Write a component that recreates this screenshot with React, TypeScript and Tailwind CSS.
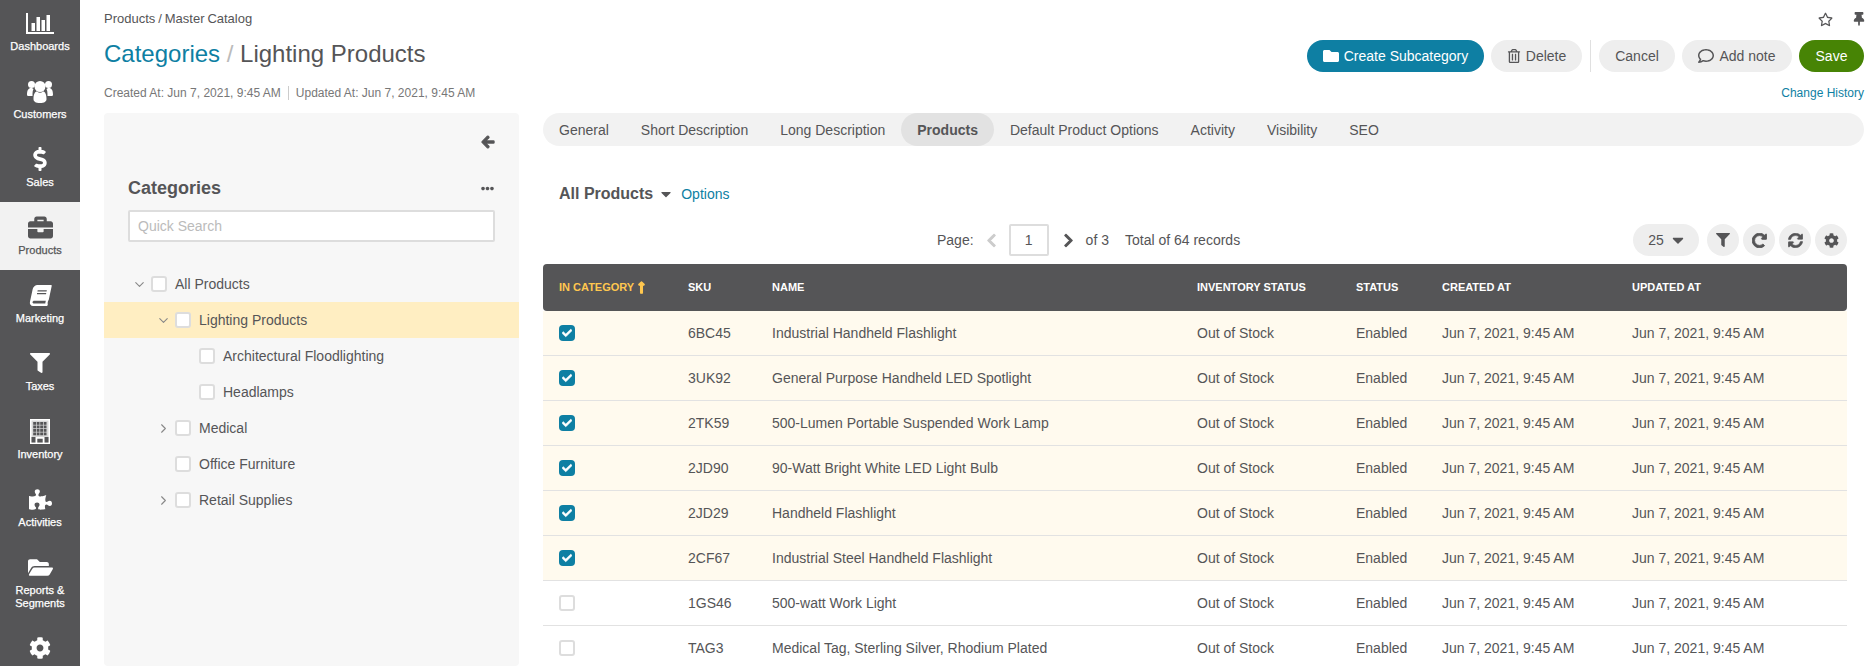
import {
  FaDollarSign, FaBriefcase, FaBook, FaFilter, FaPuzzlePiece, FaFolderOpen, FaCog,
  FaRegStar, FaThumbtack, FaFolder, FaRegTrashAlt, FaRegComment, FaArrowLeft, FaEllipsisH,
  FaChevronLeft, FaChevronRight, FaRedoAlt, FaSyncAlt, FaCaretDown, FaLongArrowAltUp, FaCheck,
} from 'react-icons/fa'
import { ChevronDown, ChevronRight } from 'lucide-react'

function ChartIcon() {
  return (
    <svg width="28" height="21" viewBox="0 0 28 21" fill="currentColor">
      <rect x="0" y="0" width="2" height="21" />
      <rect x="0" y="19" width="28" height="2" />
      <rect x="5.5" y="10" width="3.5" height="8" />
      <rect x="10.5" y="4" width="3.5" height="14" />
      <rect x="15.5" y="7" width="3.5" height="11" />
      <rect x="20.5" y="2" width="3.5" height="16" />
    </svg>
  )
}

function UsersIcon() {
  return (
    <svg width="26" height="23" viewBox="0 0 26 23" fill="currentColor">
      <circle cx="4.5" cy="4.5" r="3.5" />
      <circle cx="21.5" cy="4.5" r="3.5" />
      <path d="M0 15c0-5 1.5-7 4-7 1 0 1.500.4 2.500 1-.8 1.500-1 3-1 7H2c-1.200 0-2-.2-2-1zM26 15c0-5-1.500-7-4-7-1 0-1.500.4-2.500 1 .8 1.500 1 3 1 7H24c1.200 0 2-.2 2-1z" />
      <circle cx="13" cy="6.500" r="5.500" />
      <path d="M6.500 19c0-5 1.500-7.500 3.500-7.500 1 .8 2 1.200 3 1.200s2-.4 3-1.200c2 0 3.500 2.500 3.500 7.500 0 2.500-2 4-6.500 4s-6.500-1.500-6.500-4z" />
    </svg>
  )
}

function BuildingIcon() {
  const xs = [3.2, 6.7, 10.2, 13.700]
  const ys = [3, 6.5, 10, 13.500]
  return (
    <svg width="20" height="25" viewBox="0 0 20 25">
      <rect x="0.750" y="0.750" width="18.500" height="23.500" fill="#d8d8d8" stroke="#ffffff" strokeWidth="1.500" />
      {ys.map(y => xs.map(x => <rect key={`${x}-${y}`} x={x} y={y} width="2.800" height="2.800" fill="#555557" />))}
      <rect x="1.500" y="18" width="17" height="5.500" fill="#555557" />
      <path d="M5.500 25v-7h9v7h-1.800v-5.200H7.300V25z" fill="#ffffff" />
    </svg>
  )
}

const nav = [
  { label: 'Dashboards', icon: <ChartIcon /> },
  { label: 'Customers', icon: <UsersIcon /> },
  { label: 'Sales', icon: <FaDollarSign size={24} /> },
  { label: 'Products', icon: <FaBriefcase size={25} />, active: true },
  { label: 'Marketing', icon: <FaBook size={21} className="-skew-x-12" /> },
  { label: 'Taxes', icon: <FaFilter size={20} /> },
  { label: 'Inventory', icon: <BuildingIcon /> },
  { label: 'Activities', icon: <FaPuzzlePiece size={23} /> },
  { label: 'Reports & Segments', icon: <FaFolderOpen size={25} /> },
  { label: '', icon: <FaCog size={22} /> },
]

const tree = [
  { label: 'All Products', depth: 0, arrow: 'down' },
  { label: 'Lighting Products', depth: 1, arrow: 'down', selected: true },
  { label: 'Architectural Floodlighting', depth: 2 },
  { label: 'Headlamps', depth: 2 },
  { label: 'Medical', depth: 1, arrow: 'right' },
  { label: 'Office Furniture', depth: 1 },
  { label: 'Retail Supplies', depth: 1, arrow: 'right' },
]

const tabs = ['General', 'Short Description', 'Long Description', 'Products', 'Default Product Options', 'Activity', 'Visibility', 'SEO']

const products = [
  { sku: '6BC45', name: 'Industrial Handheld Flashlight', checked: true },
  { sku: '3UK92', name: 'General Purpose Handheld LED Spotlight', checked: true },
  { sku: '2TK59', name: '500-Lumen Portable Suspended Work Lamp', checked: true },
  { sku: '2JD90', name: '90-Watt Bright White LED Light Bulb', checked: true },
  { sku: '2JD29', name: 'Handheld Flashlight', checked: true },
  { sku: '2CF67', name: 'Industrial Steel Handheld Flashlight', checked: true },
  { sku: '1GS46', name: '500-watt Work Light', checked: false },
  { sku: 'TAG3', name: 'Medical Tag, Sterling Silver, Rhodium Plated', checked: false },
]

function Pill({ children, className = '' }: { children: React.ReactNode; className?: string }) {
  return (
    <button className={`h-8 rounded-full flex items-center justify-center gap-1 text-sm ${className}`}>
      {children}
    </button>
  )
}

function RoundBtn({ children }: { children: React.ReactNode }) {
  return <button className="w-8 h-8 rounded-full bg-[#eeeeee] flex items-center justify-center text-[#555557]">{children}</button>
}

function Box() {
  return <span className="block w-4 h-4 shrink-0 rounded-[3px] border-2 border-[#dddddd] bg-white" />
}

export default function App() {
  return (
    <div className="flex h-screen overflow-hidden bg-white text-[#555557] text-sm" style={{ fontFamily: '"Liberation Sans", Arial, sans-serif' }}>
      {/* Left nav */}
      <aside className="w-20 shrink-0 bg-[#555557] text-white -mt-[2px]">
        {nav.map(({ label, icon, active }) => (
          <div key={label || 'settings'} className={`flex flex-col items-center pt-[11px] pb-[13px] ${active ? 'bg-[#f2f2f2] text-[#555557]' : ''}`}>
            <div className="h-[28px] flex items-center justify-center">{icon}</div>
            {label && <div className="text-[11px] leading-[13px] mt-[3px] text-center px-2 [-webkit-text-stroke:0.25px_currentColor]">{label}</div>}
          </div>
        ))}
      </aside>

      <div className="flex-1 min-w-0 pl-6 pr-2">
        {/* Header */}
        <div className="h-[113px] flex justify-between">
          <div>
            <div className="text-[13px] leading-[14px] mt-[12px] [word-spacing:-0.7px]">Products / Master Catalog</div>
            <h1 className="text-2xl leading-7 mt-[14px]">
              <span className="text-[#0e7fa3]">Categories</span>
              <span className="text-[#bbbbbb]"> / </span>
              Lighting Products
            </h1>
            <div className="flex items-center text-xs leading-[14px] mt-[18px] text-[#777777]">
              <span>Created At: Jun 7, 2021, 9:45 AM</span>
              <span className="w-px h-[14px] bg-[#cccccc] mx-[7px]" />
              <span>Updated At: Jun 7, 2021, 9:45 AM</span>
            </div>
          </div>
          <div className="flex flex-col items-end">
            <div className="flex items-center gap-[19px] h-[14px] mt-[12px] -mr-[2px] text-[#555557]">
              <FaRegStar size={15} />
              <FaThumbtack size={14} />
            </div>
            <div className="flex items-center gap-[7px] mt-[14px]">
              <Pill className="w-[177px] bg-[#0e7fa3] text-white"><FaFolder size={16} className="mr-px" /> Create Subcategory</Pill>
              <Pill className="w-[91px] bg-[#eeeeee]"><FaRegTrashAlt size={14} className="mr-px" /> Delete</Pill>
              <span className="w-px h-[32px] bg-[#e0e0e0] mx-px" />
              <Pill className="w-[76px] bg-[#eeeeee]">Cancel</Pill>
              <Pill className="w-[110px] bg-[#eeeeee]"><FaRegComment size={16} className="mr-px" /> Add note</Pill>
              <Pill className="w-[65px] bg-[#478405] text-white">Save</Pill>
            </div>
            <a className="text-xs leading-[14px] mt-[14px] text-[#0e7fa3]">Change History</a>
          </div>
        </div>

        <div className="flex gap-6 h-[553px]">
          {/* Category tree */}
          <section className="w-[415px] shrink-0 bg-[#f7f7f7] rounded">
            <div className="flex justify-end pt-[22px] pr-[24px] h-[60px]">
              <FaArrowLeft size={14} className="text-[#555557] stroke-[40px]" />
            </div>
            <div className="px-6">
              <div className="flex justify-between items-center h-[30px]">
                <h2 className="text-lg font-bold">Categories</h2>
                <FaEllipsisH size={13} className="mr-px" />
              </div>
              <input
                placeholder="Quick Search"
                className="w-full h-[32px] mt-[7px] px-[8px] bg-white border-2 border-[#dddddd] rounded-[2px] text-sm outline-none placeholder:text-[#bbbbbb]"
              />
            </div>
            <div className="mt-[24px]">
              {tree.map(({ label, depth, arrow, selected }) => (
                <div key={label} className={`h-9 flex items-center ${selected ? 'bg-[#ffeec2]' : ''}`} style={{ paddingLeft: 23 + depth * 24 }}>
                  <span className="w-[24px] flex justify-center text-[#888888]">
                    {arrow === 'down' && <ChevronDown size={15} strokeWidth={1.75} />}
                    {arrow === 'right' && <ChevronRight size={15} strokeWidth={1.75} />}
                  </span>
                  <Box />
                  <span className="ml-[8px]">{label}</span>
                </div>
              ))}
            </div>
          </section>

          {/* Products */}
          <main className="flex-1 min-w-0">
            <div className="h-[33px] rounded-full bg-[#f2f2f2] flex items-center pr-4 mr-0">
              {tabs.map(tab => (
                <span
                  key={tab}
                  className={`h-full flex items-center px-4 ${tab === 'Products' ? 'bg-[#e2e2e2] rounded-full font-bold' : ''}`}
                >
                  {tab}
                </span>
              ))}
            </div>

            <div className="pr-[17px]">
              <div className="flex items-center pl-4 h-[30px] mt-[33px]">
                <span className="text-base font-bold">All Products</span>
                <FaCaretDown size={16} className="ml-[5px]" />
                <a className="text-[#0e7fa3] ml-[7px]">Options</a>
              </div>

              <div className="relative flex items-center justify-end h-8 mt-[15px]">
                <div className="absolute left-[394px] flex items-center">
                  <span>Page:</span>
                  <FaChevronLeft size={15} className="ml-[10px] text-[#cccccc] stroke-[30px]" />
                  <span className="w-[40px] h-[32px] ml-[10px] border-2 border-[#dddddd] rounded-[2px] flex items-center justify-center">1</span>
                  <FaChevronRight size={15} className="ml-[12px] stroke-[30px]" />
                  <span className="ml-[10px]">of 3</span>
                  <span className="ml-[16px]">Total of 64 records</span>
                </div>
                <div className="flex items-center gap-1">
                  <Pill className="w-[66px] pl-[3px] bg-[#eeeeee] mr-1">25 <FaCaretDown size={18} className="ml-px" /></Pill>
                  <RoundBtn><FaFilter size={14} /></RoundBtn>
                  <RoundBtn><FaRedoAlt size={15} className="stroke-[30px]" /></RoundBtn>
                  <RoundBtn><FaSyncAlt size={15} className="stroke-[20px]" /></RoundBtn>
                  <RoundBtn><FaCog size={15} /></RoundBtn>
                </div>
              </div>

              <table className="w-full table-fixed border-separate border-spacing-0 mt-2">
                <colgroup>
                  <col className="w-[129px]" />
                  <col className="w-[84px]" />
                  <col className="w-[425px]" />
                  <col className="w-[159px]" />
                  <col className="w-[86px]" />
                  <col className="w-[190px]" />
                  <col />
                </colgroup>
                <thead>
                  <tr className="h-[47px] bg-[#555557] text-white text-[11px] font-bold text-left uppercase">
                    <th className="pl-4 rounded-l-sm text-[#ffc74f]">
                      <span className="flex items-center">In Category<FaLongArrowAltUp size={13} className="ml-px stroke-[40px]" /></span>
                    </th>
                    <th className="pl-4">SKU</th>
                    <th className="pl-4">Name</th>
                    <th className="pl-4">Inventory Status</th>
                    <th className="pl-4">Status</th>
                    <th className="pl-4">Created At</th>
                    <th className="pl-4 rounded-r-sm">Updated At</th>
                  </tr>
                </thead>
                <tbody>
                  {products.map(({ sku, name, checked }) => (
                    <tr key={sku} className={`h-[45px] ${checked ? 'bg-[#fffaee]' : ''}`}>
                      <td className="pl-4 border-b border-[#e2e2e2]">
                        {checked ? (
                          <span className="w-4 h-4 rounded-[4px] bg-[#0e7fa3] text-white flex items-center justify-center"><FaCheck size={10} className="stroke-[30px]" /></span>
                        ) : (
                          <Box />
                        )}
                      </td>
                      <td className="pl-4 border-b border-[#e2e2e2]">{sku}</td>
                      <td className="pl-4 border-b border-[#e2e2e2]">{name}</td>
                      <td className="pl-4 border-b border-[#e2e2e2]">Out of Stock</td>
                      <td className="pl-4 border-b border-[#e2e2e2]">Enabled</td>
                      <td className="pl-4 border-b border-[#e2e2e2]">Jun 7, 2021, 9:45 AM</td>
                      <td className="pl-4 border-b border-[#e2e2e2]">Jun 7, 2021, 9:45 AM</td>
                    </tr>
                  ))}
                </tbody>
              </table>
            </div>
          </main>
        </div>
      </div>
    </div>
  )
}
